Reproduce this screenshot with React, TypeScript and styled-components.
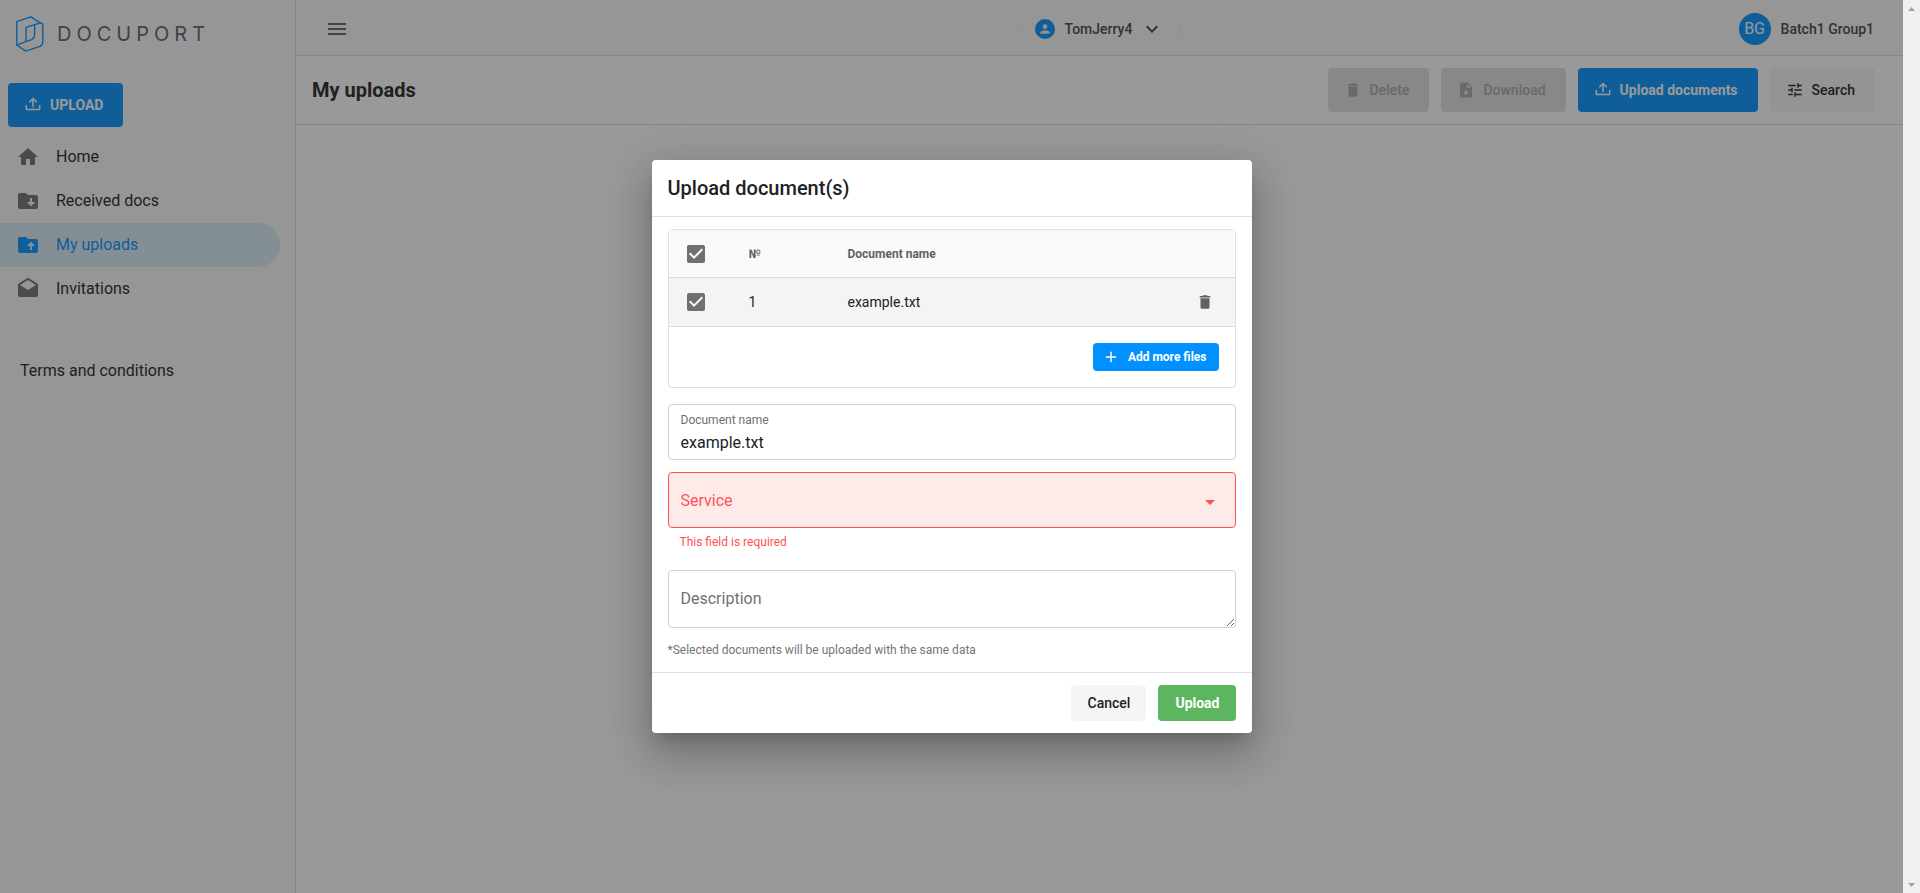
import React from 'react';
import styled, { createGlobalStyle, css } from 'styled-components';

const GlobalStyle = createGlobalStyle`
  *, *::before, *::after { box-sizing: border-box; }
  body { margin: 0; background: #fff; }
  body, button, input, select, textarea {
    font-family: Roboto, "Liberation Sans", sans-serif;
    color: #212121;
  }
  h1, h2, p, ul { margin: 0; padding: 0; }
`;

const paths = {
  menu: 'M3,6H21V8H3V6M3,11H21V13H3V11M3,16H21V18H3V16Z',
  tray: 'M2 12H4V17H20V12H22V17C22 18.11 21.11 19 20 19H4C2.9 19 2 18.11 2 17V12M12 2L6.46 7.46L7.88 8.88L11 5.75V15H13V5.75L16.13 8.88L17.55 7.45L12 2Z',
  home: 'M10,20V14H14V20H19V12H22L12,3L2,12H5V20H10Z',
  folderDown:
    'M20,6A2,2 0 0,1 22,8V18A2,2 0 0,1 20,20H4C2.89,20 2,19.1 2,18V6C2,4.89 2.89,4 4,4H10L12,6H20M19.25,13H16V9H14V13H10.75L15,17.25',
  folderUp:
    'M20,6A2,2 0 0,1 22,8V18A2,2 0 0,1 20,20H4C2.89,20 2,19.1 2,18V6C2,4.89 2.89,4 4,4H10L12,6H20M10.75,13H14V17H16V13H19.25L15,8.75',
  mail: 'M4,8L12,13L20,8V8L12,3L4,8V8M22,8V18A2,2 0 0,1 20,20H4A2,2 0 0,1 2,18V8C2,7.27 2.39,6.64 2.97,6.29L12,0.64L21.03,6.29C21.61,6.64 22,7.27 22,8Z',
  account:
    'M12,4A4,4 0 0,1 16,8A4,4 0 0,1 12,12A4,4 0 0,1 8,8A4,4 0 0,1 12,4M12,14C16.42,14 20,15.79 20,18V20H4V18C4,15.79 7.58,14 12,14Z',
  chevron: 'M7.41,8.58L12,13.17L16.59,8.58L18,10L12,16L6,10L7.41,8.58Z',
  trash: 'M19,4H15.5L14.5,3H9.5L8.5,4H5V6H19M6,19A2,2 0 0,0 8,21H16A2,2 0 0,0 18,19V7H6V19Z',
  fileDown:
    'M14,2H6C4.89,2 4,2.89 4,4V20C4,21.11 4.89,22 6,22H18C19.11,22 20,21.11 20,20V8L14,2M12,19L8,15H10.5V12H13.5V15H16L12,19M13,9V3.5L18.5,9H13Z',
  tune: 'M3,17V19H9V17H3M3,5V7H13V5H3M13,21V19H21V17H13V15H11V21H13M7,9V11H3V13H7V15H9V9H7M21,13V11H11V13H21M15,9H17V7H21V5H17V3H15V9Z',
  checked:
    'M10,17L5,12L6.41,10.58L10,14.17L17.59,6.58L19,8M19,3H5C3.89,3 3,3.89 3,5V19A2,2 0 0,0 5,21H19A2,2 0 0,0 21,19V5C21,3.89 20.1,3 19,3Z',
  unchecked:
    'M19,3H5C3.89,3 3,3.89 3,5V19A2,2 0 0,0 5,21H19A2,2 0 0,0 21,19V5C21,3.89 20.1,3 19,3M19,5V19H5V5H19Z',
  plus: 'M19,13H13V19H11V13H5V11H11V5H13V11H19V13Z',
  menuDown: 'M7,10L12,15L17,10H7Z',
};

const IconSvg = styled.svg`
  display: block;
  flex: none;
  fill: currentColor;
`;

function Icon({ name, size = 24 }: { name: keyof typeof paths; size?: number }) {
  return (
    <IconSvg width={size} height={size} viewBox="0 0 24 24" aria-hidden="true">
      <path d={paths[name]} />
    </IconSvg>
  );
}

/* ---------- page shell ---------- */

const Page = styled.div`
  display: grid;
  grid-template-columns: 1fr 17px;
  min-height: 100vh;
`;

const Shell = styled.div`
  position: relative;
  display: grid;
  grid-template-columns: 296px 1fr;
`;

const ScrollTrack = styled.div`
  display: flex;
  flex-direction: column;
  justify-content: space-between;
  align-items: center;
  padding: 7px 0 6px;
  background: #f0f0f0;
`;

const ScrollArrow = styled.svg`
  display: block;
  fill: #a3a3a3;
`;

/* ---------- sidebar ---------- */

const Sidebar = styled.aside`
  background: #fafafa;
  border-right: 1px solid #dcdcdc;
`;

const Brand = styled.a`
  display: flex;
  align-items: center;
  gap: 13px;
  height: 67px;
  padding-left: 16px;
  color: #5b5e70;
  text-decoration: none;
`;

const BrandName = styled.span`
  font-family: Inter, sans-serif;
  font-size: 20px;
  font-weight: 400;
  line-height: 24px;
  letter-spacing: 5px;
`;

const SidebarAction = styled.div`
  padding: 16px 8px 8px;
`;

const NavList = styled.ul`
  list-style: none;
`;

const NavLink = styled.a<{ $active?: boolean }>`
  display: flex;
  align-items: center;
  gap: 16px;
  height: 44px;
  margin-right: 15px;
  padding-left: 16px;
  border-radius: 0 22px 22px 0;
  font-size: 16px;
  line-height: 24px;
  text-decoration: none;
  color: ${(p) => (p.$active ? '#0091ff' : '#212121')};
  background: ${(p) => (p.$active ? '#d9edf8' : 'transparent')};

  svg { color: ${(p) => (p.$active ? '#0091ff' : '#707070')}; }
`;

const TermsLink = styled.a`
  display: block;
  margin-top: 38px;
  padding: 10px 20px;
  font-size: 16px;
  line-height: 24px;
  color: #212121;
  text-decoration: none;
`;

/* ---------- buttons ---------- */

const tones = {
  primary: css`background: #0091ff; color: #fff; font-weight: 700;`,
  success: css`background: #5cb660; color: #fff; font-weight: 700;`,
  plain: css`background: #f5f5f5; color: #212121;`,
  disabled: css`background: #e0e0e0; color: #a6a6a6;`,
};

const sizes = {
  large: css`height: 44px; padding: 0 20px 0 16px; font-size: 14px;`,
  medium: css`height: 36px; padding: 0 16px 0 17px; font-size: 14px;`,
  small: css`height: 28px; padding: 0 12px 0 9px; font-size: 12px;`,
};

const Button = styled.button<{ $tone: keyof typeof tones; $size: keyof typeof sizes }>`
  display: inline-flex;
  align-items: center;
  gap: 8px;
  border: 0;
  border-radius: 4px;
  font-weight: 500;
  line-height: 20px;
  white-space: nowrap;
  ${(p) => sizes[p.$size]}
  ${(p) => tones[p.$tone]}
`;

const IconButton = styled.button`
  display: grid;
  place-items: center;
  width: 24px;
  height: 24px;
  padding: 0;
  border: 0;
  background: none;
  color: #616161;
`;

/* ---------- main area ---------- */

const Main = styled.main`
  background: #fff;
`;

const TopBar = styled.header`
  display: grid;
  grid-template-columns: 1fr auto 1fr;
  align-items: center;
  height: 56px;
  padding: 2px 29px 0;
  background: #fafafa;
  border-bottom: 1px solid #dcdcdc;
`;

const AccountPill = styled.button`
  display: flex;
  align-items: center;
  height: 36px;
  padding: 0 16px;
  border: 1px solid #f0f0f0;
  border-radius: 18px;
  background: #fafafa;
  color: #424242;
  font-size: 14px;
  font-weight: 500;
  gap: 8px;
`;

const AccountName = styled.span`
  padding-left: 2px;
  line-height: 20px;
`;

const AccountBadge = styled.span`
  display: grid;
  place-items: center;
  width: 20px;
  height: 20px;
  border-radius: 50%;
  background: #0091ff;
  color: #eee;
`;

const Profile = styled.div`
  display: flex;
  justify-content: flex-end;
  align-items: center;
  gap: 10px;
  font-size: 14px;
  font-weight: 500;
  line-height: 20px;
  color: #424242;
`;

const Avatar = styled.span`
  display: grid;
  place-items: center;
  width: 32px;
  height: 32px;
  border-radius: 50%;
  background: #0091ff;
  color: #fff;
  font-size: 16px;
  font-weight: 400;
`;

const Toolbar = styled.div`
  display: flex;
  align-items: center;
  gap: 12px;
  height: 69px;
  padding: 0 28px 0 16px;
  border-bottom: 1px solid #dcdcdc;
`;

const PageTitle = styled.h1`
  flex: 1;
  font-size: 20px;
  font-weight: 700;
  line-height: 28px;
`;

/* ---------- dialog ---------- */

const Overlay = styled.div`
  position: absolute;
  inset: 0;
  display: grid;
  place-items: center;
  padding: 24px;
  background: rgba(33, 33, 33, 0.46);
`;

const Dialog = styled.form`
  width: 100%;
  max-width: 600px;
  border-radius: 4px;
  background: #fff;
  box-shadow: 0 11px 15px -7px rgba(0, 0, 0, 0.2), 0 24px 38px 3px rgba(0, 0, 0, 0.14),
    0 9px 46px 8px rgba(0, 0, 0, 0.12);
`;

const DialogTitle = styled.h2`
  padding: 14px 16px;
  border-bottom: 1px solid #e0e0e0;
  font-size: 20px;
  font-weight: 500;
  line-height: 28px;
`;

const DialogBody = styled.div`
  padding: 12px 16px;
`;

const DialogFooter = styled.footer`
  display: flex;
  justify-content: flex-end;
  gap: 12px;
  padding: 12px 16px;
  border-top: 1px solid #e0e0e0;
`;

const FilesCard = styled.section`
  margin-bottom: 16px;
  border: 1px solid #e0e0e0;
  border-radius: 4px;
  overflow: hidden;
`;

const FilesTable = styled.table`
  width: 100%;
  table-layout: fixed;
  border-collapse: separate;
  border-spacing: 0;
  text-align: left;

  th, td {
    padding: 0 16px;
    border-bottom: 1px solid #dcdcdc;
  }
  th:first-child, td:first-child {
    padding: 0 15px;
  }
  th {
    height: 48px;
    background: #fafafa;
    color: #616161;
    font-size: 12px;
    font-weight: 700;
  }
  td {
    height: 49px;
    background: #f4f4f4;
    font-size: 14px;
  }
`;

const CheckLabel = styled.label`
  position: relative;
  display: block;
  width: 24px;
  height: 24px;
  color: #707070;

  input {
    position: absolute;
    inset: 0;
    width: 100%;
    height: 100%;
    margin: 0;
    opacity: 0;
  }
`;

const CardActions = styled.div`
  display: flex;
  justify-content: flex-end;
  padding: 16px;
`;

const TextField = styled.div`
  display: flex;
  flex-direction: column;
  height: 56px;
  margin-bottom: 12px;
  padding: 6px 12px 4px;
  border: 1px solid #cfcfcf;
  border-radius: 4px;

  label {
    font-size: 12px;
    line-height: 18px;
    color: #707070;
  }
  input {
    width: 100%;
    height: 26px;
    padding: 0;
    border: 0;
    outline: 0;
    background: none;
    font-size: 16px;
  }
`;

const SelectField = styled.div`
  display: grid;
  align-items: center;
  grid-template-columns: 1fr 48px;
  color: #ff5252;

  select {
    grid-area: 1 / 1 / 2 / 3;
    height: 56px;
    padding: 0 12px;
    border: 1px solid #ff5252;
    border-radius: 4px;
    outline: 0;
    appearance: none;
    background: #ffeaea;
    color: inherit;
    font-size: 16px;
  }
  svg {
    grid-area: 1 / 2;
    margin-left: 10px;
    margin-top: 4px;
    pointer-events: none;
  }
`;

const ErrorText = styled.p`
  padding: 6px 12px 20px;
  font-size: 12px;
  line-height: 16px;
  color: #ff5252;
`;

const DescriptionArea = styled.textarea`
  display: block;
  width: 100%;
  height: 58px;
  padding: 16px 12px;
  border: 1px solid #cfcfcf;
  border-radius: 4px;
  outline: 0;
  resize: vertical;
  font-size: 16px;
  line-height: 24px;

  &::placeholder { color: #707070; }
`;

const Note = styled.p`
  padding: 14px 0 2px;
  font-size: 12px;
  line-height: 16px;
  color: #757575;
`;

const nav: { label: string; icon: keyof typeof paths; active?: boolean }[] = [
  { label: 'Home', icon: 'home' },
  { label: 'Received docs', icon: 'folderDown' },
  { label: 'My uploads', icon: 'folderUp', active: true },
  { label: 'Invitations', icon: 'mail' },
];

function Checkbox({ label }: { label: string }) {
  const [on, setOn] = React.useState(true);
  return (
    <CheckLabel>
      <input type="checkbox" aria-label={label} checked={on} onChange={() => setOn(!on)} />
      <Icon name={on ? 'checked' : 'unchecked'} />
    </CheckLabel>
  );
}

function LogoMark() {
  return (
    <svg width="28" height="36" viewBox="0 0 28 36" fill="none" stroke="#0091ff" strokeWidth="1.4" strokeLinejoin="round" aria-hidden="true">
      <path d="M0.8 29.2V5.6L14.8 0.8L24.2 6.8L10 11.4V25.6L0.8 29.2L9.8 35.2L23.4 30.6Q26.8 29.2 26.8 25.4V9.4Q26.8 7.4 24.2 6.8" />
      <path d="M10 25.6L15.6 23.6Q18.6 22.2 18.6 18.8V8.8" />
    </svg>
  );
}

function UploadDialog() {
  const [name, setName] = React.useState('example.txt');
  return (
    <Dialog role="dialog" aria-labelledby="dialog-title" onSubmit={(e) => e.preventDefault()}>
      <DialogTitle id="dialog-title">Upload document(s)</DialogTitle>
      <DialogBody>
        <FilesCard>
          <FilesTable>
            <colgroup>
              <col width="64" />
              <col width="99" />
              <col />
              <col width="58" />
            </colgroup>
            <thead>
              <tr>
                <th><Checkbox label="Select all files" /></th>
                <th>№</th>
                <th>Document name</th>
                <th />
              </tr>
            </thead>
            <tbody>
              <tr>
                <td><Checkbox label="Select example.txt" /></td>
                <td>1</td>
                <td>example.txt</td>
                <td>
                  <IconButton type="button" aria-label="Remove file"><Icon name="trash" size={18} /></IconButton>
                </td>
              </tr>
            </tbody>
          </FilesTable>
          <CardActions>
            <Button type="button" $tone="primary" $size="small">
              <Icon name="plus" size={18} />
              Add more files
            </Button>
          </CardActions>
        </FilesCard>
        <TextField>
          <label htmlFor="doc-name">Document name</label>
          <input id="doc-name" value={name} onChange={(e) => setName(e.target.value)} />
        </TextField>
        <SelectField>
          <select aria-label="Service" aria-invalid="true" aria-describedby="service-error" defaultValue="">
            <option value="">Service</option>
          </select>
          <Icon name="menuDown" />
        </SelectField>
        <ErrorText id="service-error">This field is required</ErrorText>
        <DescriptionArea aria-label="Description" placeholder="Description" />
        <Note>*Selected documents will be uploaded with the same data</Note>
      </DialogBody>
      <DialogFooter>
        <Button type="button" $tone="plain" $size="medium">Cancel</Button>
        <Button type="submit" $tone="success" $size="medium">Upload</Button>
      </DialogFooter>
    </Dialog>
  );
}

export default function App() {
  return (
    <>
      <GlobalStyle />
      <Page>
        <Shell>
          <Sidebar>
            <Brand href="#">
              <LogoMark />
              <BrandName>DOCUPORT</BrandName>
            </Brand>
            <SidebarAction>
              <Button type="button" $tone="primary" $size="large">
                <Icon name="tray" size={18} />
                UPLOAD
              </Button>
            </SidebarAction>
            <nav>
              <NavList>
                {nav.map((item) => (
                  <li key={item.label}>
                    <NavLink href="#" $active={item.active}>
                      <Icon name={item.icon} />
                      {item.label}
                    </NavLink>
                  </li>
                ))}
              </NavList>
            </nav>
            <TermsLink href="#">Terms and conditions</TermsLink>
          </Sidebar>
          <Main>
            <TopBar>
              <IconButton type="button" aria-label="Toggle menu"><Icon name="menu" /></IconButton>
              <AccountPill type="button">
                <AccountBadge><Icon name="account" size={14} /></AccountBadge>
                <AccountName>TomJerry4</AccountName>
                <Icon name="chevron" />
              </AccountPill>
              <Profile>
                <Avatar>BG</Avatar>
                Batch1 Group1
              </Profile>
            </TopBar>
            <Toolbar>
              <PageTitle>My uploads</PageTitle>
              <Button type="button" disabled $tone="disabled" $size="large">
                <Icon name="trash" size={18} />
                Delete
              </Button>
              <Button type="button" disabled $tone="disabled" $size="large">
                <Icon name="fileDown" size={18} />
                Download
              </Button>
              <Button type="button" $tone="primary" $size="large">
                <Icon name="tray" size={18} />
                Upload documents
              </Button>
              <Button type="button" $tone="plain" $size="large">
                <Icon name="tune" size={18} />
                Search
              </Button>
            </Toolbar>
          </Main>
          <Overlay>
            <UploadDialog />
          </Overlay>
        </Shell>
        <ScrollTrack aria-hidden="true">
          <ScrollArrow width="7" height="4" viewBox="0 0 7 4"><path d="M0 4L3.5 0L7 4Z" /></ScrollArrow>
          <ScrollArrow width="7" height="4" viewBox="0 0 7 4"><path d="M0 0L3.5 4L7 0Z" /></ScrollArrow>
        </ScrollTrack>
      </Page>
    </>
  );
}
